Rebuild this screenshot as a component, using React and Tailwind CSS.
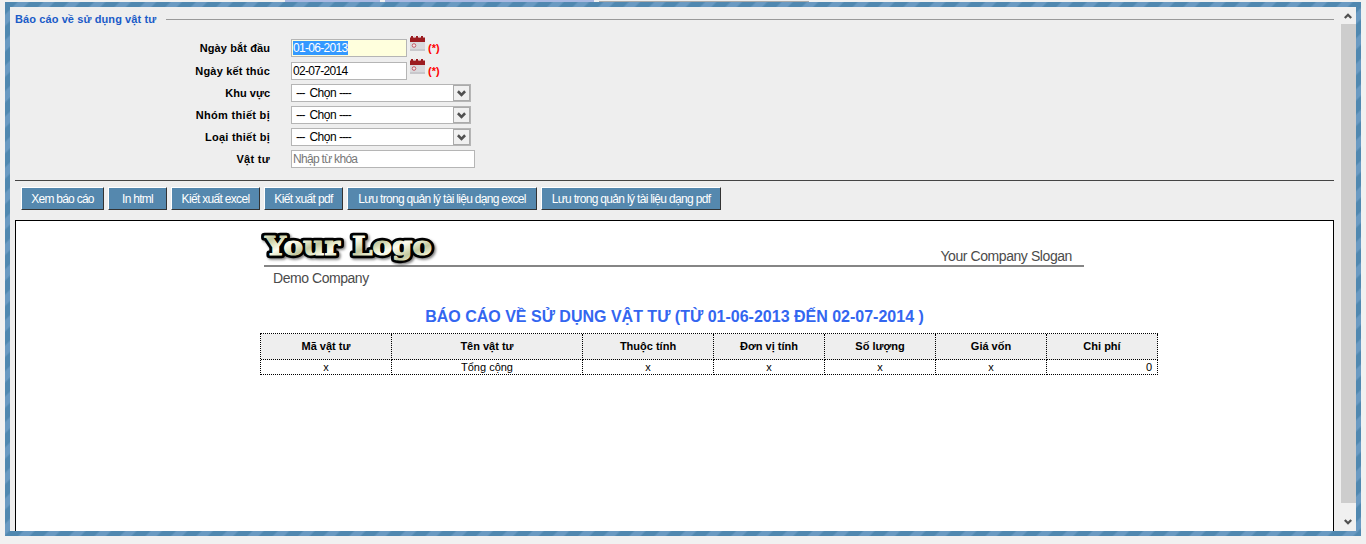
import React from "react";

function Calendar() {
  return (
    <svg className="ml-[2px] block h-4 w-4 shrink-0" viewBox="0 0 16 16">
      <rect x="1" y="5" width="15" height="10" fill="#d9d9dc" />
      <rect x="1" y="13" width="15" height="2" fill="#c8c8cc" />
      <path d="M1 1.500h15V6H1z" fill="#9c1c20" />
      <path d="M2 0h2v3H2zM7 0h2v3H7zM12 0h2v3h-2z" fill="#9c1c20" />
      <path d="M5.500 0v1.500M10.500 0v1.500" stroke="#e9c9cb" strokeWidth="0.8" />
      <circle cx="5" cy="9.500" r="1.800" fill="#f4e8ea" stroke="#c0505c" strokeWidth="0.9" />
    </svg>
  );
}

function Chevron({ up, className }) {
  return (
    <svg className={className} viewBox="0 0 8 6">
      <path d={up ? "M0.800 5L4 1.800L7.200 5" : "M0.800 1L4 4.200L7.200 1"} fill="none" stroke="#505050" strokeWidth="2.300" />
    </svg>
  );
}

function Row({ label, tracking, className, children }) {
  return (
    <div className={`flex items-center ${className}`}>
      <div className="flex w-[260px] shrink-0 justify-end pr-[5px] font-bold">
        <span className={tracking}>{label}</span>
      </div>
      <div className="flex items-center pl-4">{children}</div>
    </div>
  );
}

function DateField({ value, selected }) {
  return (
    <>
      <div className={`flex h-[18px] w-[116px] items-center border border-[#b5b5b5] px-px text-[12px] ${selected ? "bg-[#ffffdd]" : "bg-white"}`}>
        <span className={`leading-[14px] tracking-[-0.68px] ${selected ? "bg-[#3399ff] text-white" : ""}`}>{value}</span>
      </div>
      <div className="-mt-[7px]"><Calendar /></div>
      <span className="ml-[3px] font-bold text-[#f00]">(*)</span>
    </>
  );
}

function Select() {
  return (
    <div className="flex h-[18px] w-[180px] items-center border border-[#b5b5b5] bg-white text-[12px]">
      <span className="flex flex-1 gap-[3px] pl-1 leading-[14px]">
        <span className="tracking-[-1.2px]">---</span>
        <span className="pl-[2px] tracking-[-0.5px]">Chọn</span>
        <span className="tracking-[-1.1px]">----</span>
      </span>
      <span className="flex h-4 w-[17px] items-center justify-center border border-[#aaa] bg-[#f0f0f0] pt-px">
        <Chevron className="h-[7px] w-[9px]" />
      </span>
    </div>
  );
}

const buttons = [
  ["Xem báo cáo", "w-[83px]", "tracking-[-0.75px]"],
  ["In html", "w-[59px]", "tracking-[-0.75px]"],
  ["Kiết xuất excel", "w-[89px]", "tracking-[-0.68px]"],
  ["Kiết xuất pdf", "w-[79px]", "tracking-[-0.65px]"],
  ["Lưu trong quản lý tài liệu dạng excel", "w-[190px]", "tracking-[-0.7px]"],
  ["Lưu trong quản lý tài liệu dạng pdf", "w-[180px]", "tracking-[-0.67px]"],
];

const columns = [
  ["Mã vật tư", "x", "w-[131px]"],
  ["Tên vật tư", "Tổng cộng", "w-[191px]"],
  ["Thuộc tính", "x", "w-[131px]"],
  ["Đơn vị tính", "x", "w-[111px]"],
  ["Số lượng", "x", "w-[111px]"],
  ["Giá vốn", "x", "w-[111px]"],
  ["Chi phí", "0", "w-[111px]"],
];

function Logo() {
  return (
    <svg className="block h-[38px] w-[180px]" viewBox="0 0 180 38">
      <defs>
        <linearGradient id="stone" x1="0" y1="0" x2="0" y2="12" gradientUnits="userSpaceOnUse" spreadMethod="reflect" gradientTransform="rotate(-25)">
          <stop offset="0" stopColor="#fdfdf0" />
          <stop offset="0.5" stopColor="#e3e7c6" />
          <stop offset="1" stopColor="#c3c8a0" />
        </linearGradient>
        <filter id="soft" x="-10%" y="-20%" width="120%" height="150%">
          <feDropShadow dx="1.500" dy="1.500" stdDeviation="1.200" floodColor="#000" floodOpacity="0.5" />
        </filter>
      </defs>
      <g
        fontFamily="'DejaVu Serif', 'Liberation Serif', serif"
        fontWeight="bold"
        fontSize="26"
        strokeLinejoin="round"
        paintOrder="stroke"
        fill="url(#stone)"
        stroke="#000"
        strokeWidth="6.500"
        filter="url(#soft)"
      >
        <text x="5" y="24" textLength="75" lengthAdjust="spacingAndGlyphs">Your</text>
        <text x="92" y="24" textLength="80" lengthAdjust="spacingAndGlyphs">Logo</text>
      </g>
      <g
        aria-hidden="true"
        fontFamily="'DejaVu Serif', 'Liberation Serif', serif"
        fontWeight="bold"
        fontSize="26"
        strokeLinejoin="round"
        fill="url(#stone)"
        stroke="url(#stone)"
        strokeWidth="1"
      >
        <text x="5" y="24" textLength="75" lengthAdjust="spacingAndGlyphs">Your</text>
        <text x="92" y="24" textLength="80" lengthAdjust="spacingAndGlyphs">Logo</text>
      </g>
    </svg>
  );
}

export default function App() {
  return (
    <div className="h-[544px] w-[1366px] overflow-hidden bg-[#f1f1f1] font-['Liberation_Sans',Arial,sans-serif] text-[11px] leading-[14px] text-black">
      <div className="flex h-[2px] pl-[285px]">
        <div className="h-[2px] w-[95px] bg-[#a9b9e2]" />
        <div className="ml-[5px] h-[2px] w-[209px] bg-[#a9b9e2]" />
        <div className="ml-[5px] h-[2px] w-[210px] border-b border-[#aaa] bg-[#eeeeee]" />
      </div>
      <div className="ml-[5px] h-[534px] w-[1356px] bg-[repeating-linear-gradient(135deg,#5088b0_0px,#5088b0_8px,#6a9ac2_10px,#6a9ac2_16px,#5088b0_18px)] p-[5px]">
        <div className="flex h-full bg-[#eeeeee]">
          <div className="flex w-[1324px] shrink-0 flex-col pl-[5px]">
            <div className="flex h-[25px] shrink-0 items-center">
              <span className="-mt-[2px] w-[151px] whitespace-nowrap font-bold tracking-[0.1px] text-[#1a5bc8]">Báo cáo về sử dụng vật tư</span>
              <span className="h-px flex-1 bg-[#999]" />
            </div>
            <div className="h-[149px] shrink-0 border-b border-[#444] pt-1">
              <Row label="Ngày bắt đầu" tracking="tracking-[0.1px]" className="h-[23px]"><DateField value="01-06-2013" selected /></Row>
              <Row label="Ngày kết thúc" tracking="tracking-[0.2px]" className="h-[23px]"><DateField value="02-07-2014" /></Row>
              <Row label="Khu vực" tracking="" className="h-[22px]"><Select /></Row>
              <Row label="Nhóm thiết bị" tracking="tracking-[0.3px]" className="h-[22px]"><Select /></Row>
              <Row label="Loại thiết bị" tracking="tracking-[0.25px]" className="h-[22px]"><Select /></Row>
              <Row label="Vật tư" tracking="tracking-[0.3px]" className="h-[22px]">
                <div className="flex h-[18px] w-[184px] items-center border border-[#b5b5b5] bg-white px-px text-[12px] tracking-[-0.7px] text-[#777]">Nhập từ khóa</div>
              </Row>
            </div>
            <div className="flex h-[39px] shrink-0 gap-1 pl-[6px] pt-[6px]">
              {buttons.map(([text, width, tracking]) => (
                <button key={text} className={`h-[23px] shrink-0 whitespace-nowrap border border-b-[#333] border-l-white border-r-[#333] border-t-white bg-[#5588ae] text-center text-[12px] text-white ${width} ${tracking}`}>
                  {text}
                </button>
              ))}
            </div>
            <div className="flex-1 border-x border-t border-black bg-white pl-[244px]">
              <div className="flex h-[44px] w-[824px] justify-between pt-[10px]">
                <Logo />
                <span className="mr-3 mt-[17px] whitespace-nowrap text-[14px] leading-4 tracking-[-0.42px] text-[#4b4b4b]">Your Company Slogan</span>
              </div>
              <div className="ml-1 h-[2px] w-[820px] bg-[#858585]" />
              <div className="ml-[13px] mt-[3px] text-[14px] leading-4 tracking-[-0.45px] text-[#4b4b4b]">Demo Company</div>
              <div className="mt-[21px] w-[829px] text-center text-[16px] font-bold leading-[20px] text-[#3366f0]">
                BÁO CÁO VỀ SỬ DỤNG VẬT TƯ (TỪ 01-06-2013 ĐẾN 02-07-2014 )
              </div>
              <div className="mt-[6px] flex w-[898px] border-l border-t border-dotted border-black">
                {columns.map(([head, value, width], i) => (
                  <div key={i} className={`shrink-0 text-center ${width}`}>
                    <div className="flex h-[26px] items-center justify-center border-b border-r border-dotted border-black bg-[#eee] pb-[2px] font-bold">{head}</div>
                    <div className={`h-[15px] border-b border-r border-dotted border-black leading-[14px] ${value === "0" ? "pr-[5px] text-right" : ""}`}>{value}</div>
                  </div>
                ))}
              </div>
            </div>
          </div>
          <div className="w-[6px] shrink-0" />
          <div className="flex w-4 flex-col items-center bg-[#f0f0f0]">
            <div className="flex h-[17px] items-center"><Chevron up className="h-[6px] w-2" /></div>
            <div className="h-[479px] w-[15px] bg-[#cdcdcd]" />
            <div className="flex flex-1 items-center pt-[10px]"><Chevron className="h-[6px] w-2" /></div>
          </div>
        </div>
      </div>
    </div>
  );
}
